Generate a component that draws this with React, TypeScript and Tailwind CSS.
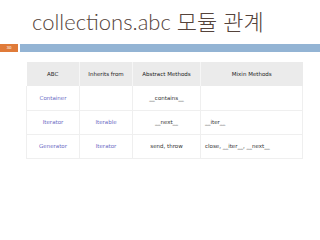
const font = { fontFamily: '"DejaVu Sans", "Noto Sans CJK KR", sans-serif' };
const titleFont = { fontFamily: 'Lato, "Noto Sans CJK KR", sans-serif' };

const rows = [
  { abc: 'Container', inherits: '', abstract: '__contains__', mixin: '' },
  { abc: 'Iterator', inherits: 'Iterable', abstract: '__next__', mixin: '__iter__' },
  { abc: 'Generator', inherits: 'Iterator', abstract: 'send, throw', mixin: 'close, __iter__, __next__' },
];

export default function App() {
  return (
    <div className="w-[320px] h-[240px] bg-white overflow-hidden" style={font}>
      <h1 className="h-[44px] pl-[32px] pt-[8px] text-[22px] leading-[28px] text-[#55433b] font-light" style={titleFont}>
        collections.abc 모듈 관계
      </h1>
      <div className="flex h-[8px] gap-[2px]">
        <div className="w-[18px] bg-[#e07b39] text-[4px] leading-[8px] text-white text-center">30</div>
        <div className="flex-1 bg-[#93b4d4]" />
      </div>
      <div className="pl-[26px] pt-[10px]">
        <table className="w-[276px] border-collapse table-fixed text-[5.5px] text-[#333]">
          <colgroup>
            <col className="w-[53px]" />
            <col className="w-[53px]" />
            <col className="w-[68px]" />
            <col className="w-[102px]" />
          </colgroup>
          <thead>
            <tr className="h-[24px] bg-[#ebebeb]">
              <th className="font-normal text-center text-[#222] border-r border-[#f6f6f6]">ABC</th>
              <th className="font-normal text-center text-[#222] border-r border-[#f6f6f6]">Inherits from</th>
              <th className="font-normal text-center text-[#222] border-r border-[#f6f6f6]">Abstract Methods</th>
              <th className="font-normal text-center text-[#222]">Mixin Methods</th>
            </tr>
          </thead>
          <tbody>
            {rows.map((r) => (
              <tr key={r.abc} className="h-[24px] border-b border-[#efefef]">
                <td className="text-center text-[#6b6bc4] border-r border-l border-[#efefef]">{r.abc}</td>
                <td className="text-center text-[#6b6bc4] border-r border-[#efefef]">{r.inherits}</td>
                <td className="text-center border-r border-[#efefef]">{r.abstract}</td>
                <td className="pl-[4px] border-r border-[#efefef]">{r.mixin}</td>
              </tr>
            ))}
          </tbody>
        </table>
      </div>
    </div>
  );
}
